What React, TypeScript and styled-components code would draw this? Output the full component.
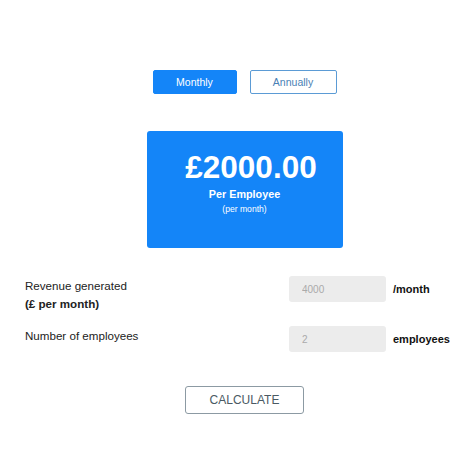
import { useState } from 'react';
import styled, { createGlobalStyle } from 'styled-components';

const GlobalStyle = createGlobalStyle`
  html, body {
    margin: 0;
    padding: 0;
    background: #ffffff;
    font-family: "Liberation Sans", Arial, sans-serif;
  }
`;

const Page = styled.div`
  width: 474px;
  height: 474px;
  box-sizing: border-box;
  padding: 70px 10px 0 25px;
  display: flex;
  flex-direction: column;
`;

const Toggle = styled.div`
  display: flex;
  justify-content: center;
  gap: 13px;
`;

interface TabProps {
  active?: boolean;
}

const Tab = styled.button<TabProps>`
  width: ${(props) => (props.active ? '84px' : '87px')};
  height: 24px;
  box-sizing: border-box;
  border-radius: 2px;
  font-family: "Liberation Sans", Arial, sans-serif;
  font-size: 10.5px;
  cursor: pointer;
  border: 1px solid ${(props) => (props.active ? '#1485f8' : '#5b9bd5')};
  background: ${(props) => (props.active ? '#1485f8' : '#ffffff')};
  color: ${(props) => (props.active ? '#ffffff' : '#4a7fb5')};
`;

const PriceCard = styled.div`
  align-self: center;
  margin-top: 37px;
  width: 196px;
  height: 117px;
  box-sizing: border-box;
  border-radius: 3px;
  background: #1485f8;
  color: #ffffff;
  display: flex;
  flex-direction: column;
  align-items: center;
  padding-top: 17px;
`;

const Price = styled.div`
  font-size: 31.5px;
  font-weight: bold;
  line-height: 38px;
  padding-left: 13px;
`;

const PriceLabel = styled.div`
  font-size: 10.8px;
  font-weight: bold;
  line-height: 15px;
  margin-top: 1px;
`;

const PriceSub = styled.div`
  font-size: 8.6px;
  line-height: 12px;
  margin-top: 1px;
`;

const Form = styled.div`
  margin-top: 28px;
  display: flex;
  flex-direction: column;
  gap: 13px;
`;

const Row = styled.div`
  display: flex;
  align-items: flex-start;
`;

const Label = styled.div`
  flex: 1;
  font-size: 11.6px;
  line-height: 18px;
  color: #222222;
  padding-top: 1px;
`;

const Strong = styled.div`
  font-weight: bold;
`;

const Input = styled.input`
  width: 97px;
  height: 26px;
  box-sizing: border-box;
  border: none;
  border-radius: 3px;
  background: #ececec;
  padding: 0 13px;
  font-family: "Liberation Sans", Arial, sans-serif;
  font-size: 10px;
  color: #999999;
  outline: none;
  &::placeholder {
    color: #aaaaaa;
  }
`;

const Unit = styled.div`
  width: 78px;
  padding-left: 7px;
  box-sizing: border-box;
  font-size: 11px;
  font-weight: bold;
  line-height: 26px;
  color: #111111;
`;

const Calculate = styled.button`
  align-self: center;
  margin-top: 34px;
  width: 119px;
  height: 28px;
  box-sizing: border-box;
  border: 1px solid #8c9aa3;
  border-radius: 3px;
  background: #ffffff;
  font-family: "Liberation Sans", Arial, sans-serif;
  font-size: 12px;
  color: #4a5a63;
  cursor: pointer;
`;

export default function App() {
  const [period, setPeriod] = useState<'monthly' | 'annually'>('monthly');
  return (
    <>
      <GlobalStyle />
      <Page>
        <Toggle>
          <Tab active={period === 'monthly'} onClick={() => setPeriod('monthly')}>Monthly</Tab>
          <Tab active={period === 'annually'} onClick={() => setPeriod('annually')}>Annually</Tab>
        </Toggle>
        <PriceCard>
          <Price>£2000.00</Price>
          <PriceLabel>Per Employee</PriceLabel>
          <PriceSub>(per month)</PriceSub>
        </PriceCard>
        <Form>
          <Row>
            <Label>
              Revenue generated
              <Strong>(£ per month)</Strong>
            </Label>
            <Input placeholder='4000' />
            <Unit>/month</Unit>
          </Row>
          <Row>
            <Label>Number of employees</Label>
            <Input placeholder='2' />
            <Unit>employees</Unit>
          </Row>
        </Form>
        <Calculate>CALCULATE</Calculate>
      </Page>
    </>
  );
}
